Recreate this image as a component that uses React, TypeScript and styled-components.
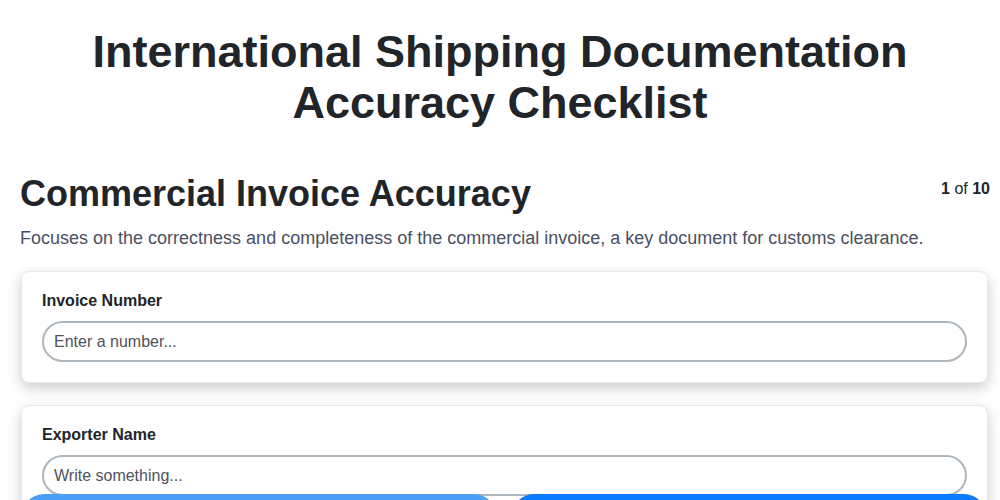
import React from 'react'
import styled, { createGlobalStyle } from 'styled-components'

const GlobalStyle = createGlobalStyle`
  body {
    margin: 0;
    background: #ffffff;
    font-family: "Liberation Sans", Arial, sans-serif;
    color: #212529;
  }
  * { box-sizing: border-box; }
`

const fields = [
  { label: 'Invoice Number', placeholder: 'Enter a number...' },
  { label: 'Exporter Name', placeholder: 'Write something...' },
  { label: 'Importer Name', placeholder: 'Write something...' },
]

const App = () => {
  return (
    <>
      <GlobalStyle />
      <Page>
        <Title>International Shipping Documentation Accuracy Checklist</Title>
        <SectionHead>
          <Heading>Commercial Invoice Accuracy</Heading>
          <Counter>
            <b>1</b> of <b>10</b>
          </Counter>
        </SectionHead>
        <Description>
          Focuses on the correctness and completeness of the commercial invoice, a key document for
          customs clearance.
        </Description>
        <Cards>
          {fields.map((f) => (
            <Card key={f.label}>
              <Label>{f.label}</Label>
              <Input placeholder={f.placeholder} />
            </Card>
          ))}
        </Cards>
      </Page>
      <Footer>
        <NavButton $variant="prev">Previous</NavButton>
        <NavButton $variant="next">Next</NavButton>
      </Footer>
    </>
  )
}

export default App

const Page = styled.div`
  padding: 0 12px 120px 20px;
`

const Title = styled.h1`
  margin: 0;
  padding: 26px 64px 0 56px;
  text-align: center;
  font-size: 45px;
  line-height: 51px;
  font-weight: 700;
  color: #212529;
`

const SectionHead = styled.div`
  display: flex;
  justify-content: space-between;
  align-items: flex-start;
  margin-top: 45px;
`

const Heading = styled.h2`
  margin: 0;
  font-size: 36px;
  line-height: 42px;
  font-weight: 700;
  color: #212529;
`

const Counter = styled.div`
  font-size: 16px;
  line-height: 20px;
  padding-top: 6px;
  margin-right: -2px;
  color: #212529;
  b { font-weight: 700; }
`

const Description = styled.p`
  margin: 11px 0 0;
  font-size: 18px;
  line-height: 24px;
  color: #4a5061;
`

const Cards = styled.div`
  display: flex;
  flex-direction: column;
  gap: 22px;
  margin-top: 21px;
`

const Card = styled.div`
  margin-left: 1px;
  padding: 20px;
  background: #ffffff;
  border: 1px solid #e7e7ee;
  border-radius: 8px;
  box-shadow: 0 5px 14px rgba(0, 0, 0, 0.2);
`

const Label = styled.div`
  font-size: 16px;
  line-height: 18px;
  font-weight: 700;
  color: #212529;
  margin-bottom: 11px;
`

const Input = styled.input`
  display: block;
  width: 100%;
  height: 41px;
  padding: 0 10px;
  border: 2px solid #adb5bd;
  border-radius: 21px;
  font-family: "Liberation Sans", Arial, sans-serif;
  font-size: 16px;
  color: #212529;
  outline: none;
  &::placeholder { color: #50535c; opacity: 1; }
`

const Footer = styled.div`
  position: fixed;
  left: 22px;
  right: 14px;
  bottom: -66px;
  display: flex;
  gap: 16px;
`

const NavButton = styled.button<{ $variant: 'prev' | 'next' }>`
  flex: 1;
  height: 72px;
  padding-top: 20px;
  border: none;
  border-radius: 22px;
  background: ${(p) => (p.$variant === 'prev' ? '#4a9ff5' : '#0a7bff')};
  color: #ffffff;
  font-family: "Liberation Sans", Arial, sans-serif;
  font-size: 16px;
  font-weight: 700;
`
